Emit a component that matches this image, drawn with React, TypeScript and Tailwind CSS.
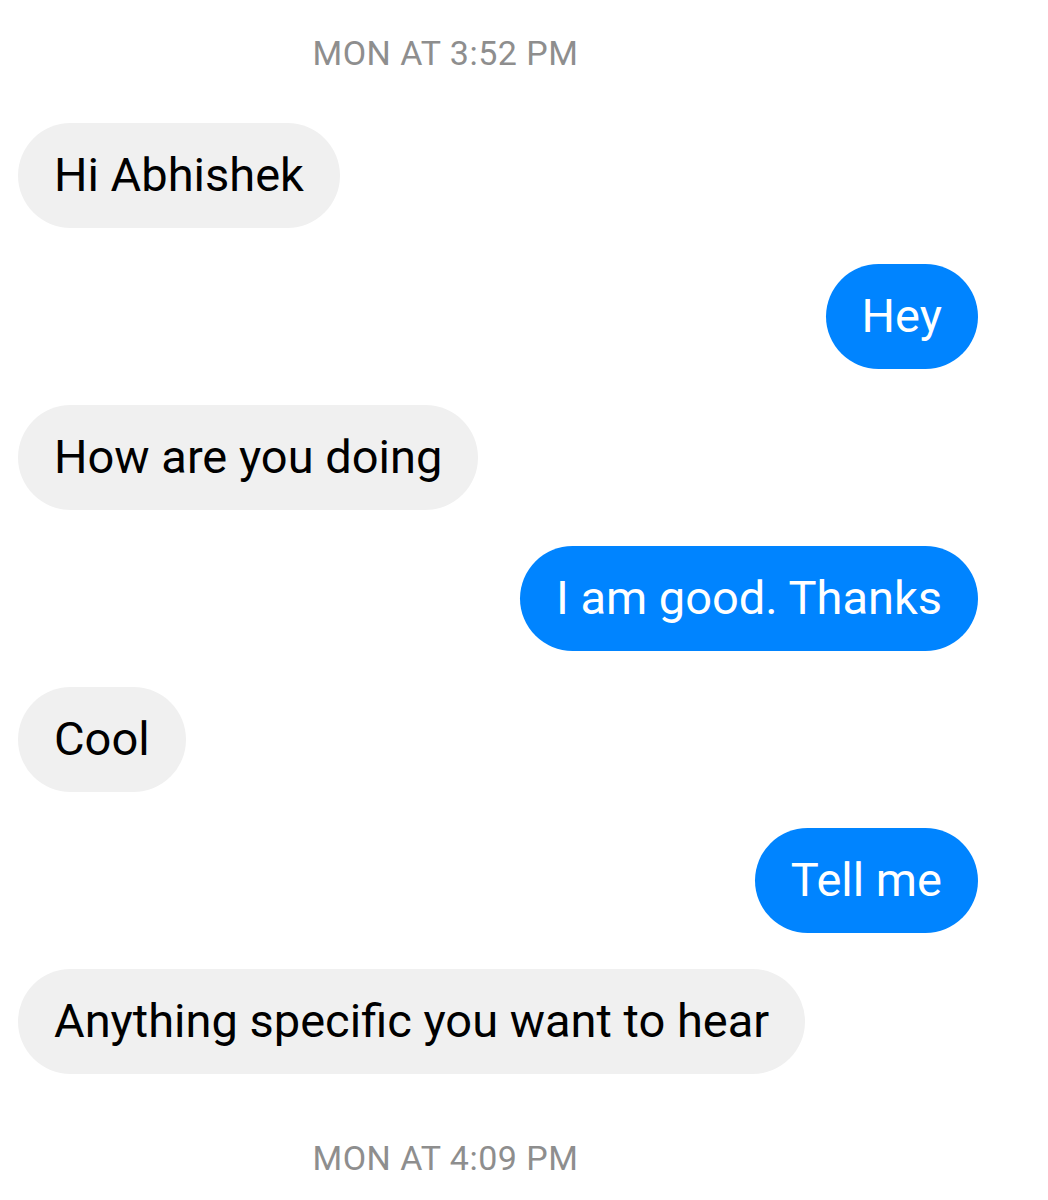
import React from "react";

const msgs: { text: string; me: boolean }[] = [
  { text: "Hi Abhishek", me: false },
  { text: "Hey", me: true },
  { text: "How are you doing", me: false },
  { text: "I am good. Thanks", me: true },
  { text: "Cool", me: false },
  { text: "Tell me", me: true },
  { text: "Anything specific you want to hear", me: false },
];

function Stamp({ text }: { text: string }) {
  return (
    <div className="flex w-[891px] justify-center h-[40px] items-center text-[34px] tracking-[0.5px] leading-[40px] text-[#8e8e8e]">
      {text}
    </div>
  );
}

export default function App() {
  return (
    <div
      className="w-[1048px] h-[1200px] bg-white overflow-hidden pt-[33px]"
      style={{ fontFamily: "Roboto, 'Noto Sans', sans-serif" }}
    >
      <Stamp text="MON AT 3:52 PM" />
      <div className="flex flex-col gap-[36px] pl-[18px] pr-[70px] mt-[50px]">
        {msgs.map((m, i) => (
          <div key={i} className={m.me ? "flex justify-end" : "flex justify-start"}>
            <div
              className={
                "h-[105px] rounded-full px-[36px] flex items-center text-[47px] whitespace-nowrap " +
                (m.me ? "bg-[#0084ff] text-white" : "bg-[#f0f0f0] text-black")
              }
            >
              {m.text}
            </div>
          </div>
        ))}
      </div>
      <div className="mt-[64px]">
        <Stamp text="MON AT 4:09 PM" />
      </div>
    </div>
  );
}
